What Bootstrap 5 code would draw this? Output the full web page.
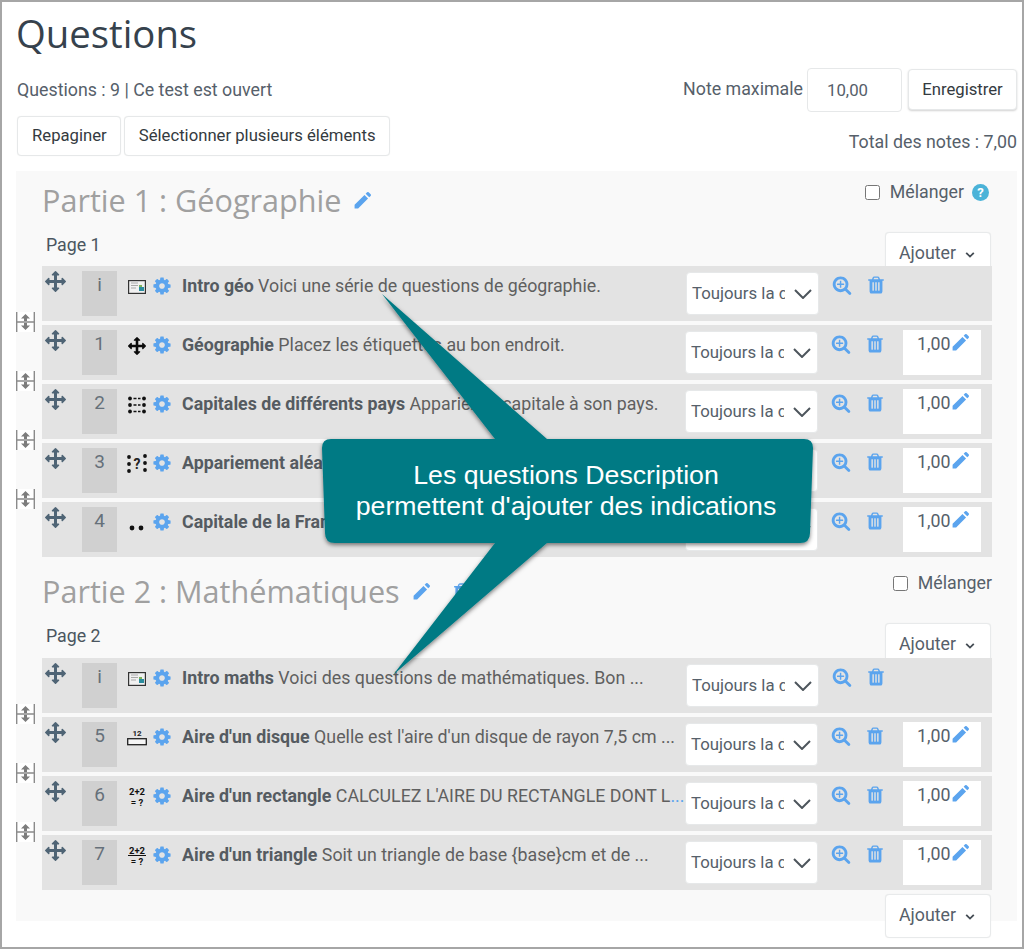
<!DOCTYPE html>
<html lang="fr">
<head>
<meta charset="utf-8">
<title>Questions</title>
<link href="https://cdn.jsdelivr.net/npm/bootstrap@5.3.0/dist/css/bootstrap.min.css" rel="stylesheet">
<style>
html,body{margin:0;padding:0;background:#fff}
body{font-family:Roboto,"Liberation Sans",sans-serif;font-size:17.8px;color:#56606a}
.frame{position:relative;width:1024px;height:949px;border:2px solid #a6a6a6;padding:0 5px 0 14px;overflow:hidden;box-sizing:border-box}
.qtitle{font-family:"Open Sans",sans-serif;font-weight:400;font-size:38.3px;line-height:50px;color:#36424d;margin:6px 0 10px 0}
.plainbtn{background:#fff;border:1px solid #e6e8e9;color:#343a40;font-size:16.7px;border-radius:4px;line-height:24px;padding:7px 13px 7px 14px;box-shadow:0 0 1px rgba(0,0,0,.08)}
.left-head{height:103px}
.status{line-height:24px;margin:10px 0 14px 1px}
.left-head .plainbtn:first-child{margin-left:1px}
.right-head{width:340px}
.gradeinput{width:95px;height:44px;border:1px solid #e6e8e9;border-radius:4px;background:#fff;padding:0 19px;line-height:42px;color:#56606a;font-size:16.8px}
.savebtn{width:109px;height:41px;padding:0;margin-left:6px;margin-top:1px;box-shadow:0 1px 2px rgba(0,0,0,.18)}
.maxlabel{margin-right:4px;line-height:41px}
.totalline{text-align:right;margin-top:18px;line-height:24px}
.secbox{background:#f9f9f9;height:750px;padding:0 25px 0 26px;margin-top:0}
.sechead{height:61px}
.sechead.second{height:66px}
.sectitle{font-family:"Open Sans",sans-serif;font-weight:400;font-size:30.6px;line-height:40px;color:#a0a0a0;margin:0}
.titlebox{padding-top:9px}
.second .titlebox{padding-top:14px}
.titlepen{margin-left:12px}
.shuffle{padding-top:8px}
.second .shuffle{padding-top:13px}
.shuffle input{width:15px;height:15px;margin:0 10px 0 0;accent-color:#777}
.pagebar{height:34px;padding-left:4px}
.pagebar.second{height:35px}
.pagename{padding-top:1px;line-height:24px;color:#4b5660}
.addbtn{width:106px;height:44px;margin-right:1px;background:#fff;border:1px solid #e8eaeb;border-radius:4px;color:#56606a;padding:7px 0 0 13px;line-height:26px;text-align:left;box-shadow:0 0 1px rgba(0,0,0,.08)}
.addbtn svg{margin-left:9px;vertical-align:0}
.qrow{position:relative;height:55px;background:#e3e3e3;margin-bottom:4px;z-index:1}
.qrow:last-child{margin-bottom:0}
.movecell{width:40px;padding:1px 0 0 3px}
.numcell{width:35px;height:45px;margin-top:5px;background:#d0d0d0;text-align:center;color:#66707a;font-size:19px;line-height:28px;flex:none}
.iconcell{width:26px;margin-left:11px;padding-top:7px;flex:none}
.gearcell{width:28px;padding-top:6px;flex:none}
.gearcell svg{margin-left:-2px}
.textcell{width:504px;padding-top:8px;line-height:24px;white-space:nowrap;overflow:hidden;color:#5f5f5f;flex:none}
.textcell b{color:#555b61;font-weight:700}
.pickcell{width:146px;padding-top:6px;flex:none}
.shiftl .pickcell{margin-left:-1px;width:146px}
.versionpick{width:133px;height:43px;padding:0 33px 0 5px;font-family:Roboto,sans-serif;font-size:16.8px;color:#56606a;border:1px solid #e6e8e9;border-radius:4px;background-image:url("data:image/svg+xml,%3csvg xmlns='http://www.w3.org/2000/svg' viewBox='0 0 18 10'%3e%3cpath fill='none' stroke='%234d555c' stroke-width='2' d='M1 1l8 8 8-8'/%3e%3c/svg%3e");background-size:18px 10px;background-position:right 6px center}
.zoomcell{width:34px;padding-top:5px;flex:none}
.trashcell{width:38px;padding-top:5px;flex:none}
.markcell{width:78px;height:45px;margin-top:5px;background:#fff;padding:1px 0 0 14px;line-height:26px;font-size:17.8px;color:#56606a;flex:none;white-space:nowrap}
.markcell svg{vertical-align:-2px;margin-left:1px}
.breakicon{position:absolute;left:-26px;top:-13px;width:19px;height:20px;background:#fff;z-index:2}
.lastadd{position:absolute;left:883px;top:892px;z-index:1}
.tipshape{position:absolute;left:0;top:0;z-index:5;pointer-events:none}
.tiptext{position:absolute;left:320px;top:458px;width:488px;text-align:center;color:#fff;font-family:"Liberation Sans",Arial,sans-serif;font-size:26.7px;line-height:31px;z-index:6;white-space:nowrap}
.ellip{color:#5ba4ee}
.helpmark{margin-right:1px}
</style>
</head>
<body>
<svg width="0" height="0" class="d-block" aria-hidden="true">
<defs>
<symbol id="i-move" viewBox="0 0 1792 1792"><path d="M1792 896q0 26-19 45l-256 256q-19 19-45 19t-45-19-19-45v-128h-384v384h128q26 0 45 19t19 45-19 45l-256 256q-19 19-45 19t-45-19l-256-256q-19-19-19-45t19-45 45-19h128v-384h-384v128q0 26-19 45t-45 19-45-19l-256-256q-19-19-19-45t19-45l256-256q19-19 45-19t45 19 19 45v128h384v-384h-128q-26 0-45-19t-19-45 19-45l256-256q19-19 45-19t45 19l256 256q19 19 19 45t-19 45-45 19h-128v384h384v-128q0-26 19-45t45-19 45 19l256 256q19 19 19 45z"/></symbol>
<symbol id="i-gear" viewBox="0 0 1792 1792"><path fill-rule="evenodd" d="M1152 896q0-106-75-181t-181-75-181 75-75 181 75 181 181 75 181-75 75-181zm512-109v222q0 12-8 23t-20 13l-185 28q-19 54-39 91 35 50 107 138 10 12 10 25t-9 23q-27 37-99 108t-94 71q-12 0-26-9l-138-108q-44 23-91 38-16 136-29 186-7 28-36 28h-222q-14 0-24.500-8.500t-11.500-21.500l-28-184q-49-16-90-37l-141 107q-10 9-25 9-14 0-25-11-126-114-165-168-7-10-7-23 0-12 8-23 15-21 51-66.500t54-70.500q-27-50-41-99l-183-27q-13-2-21-12.500t-8-23.500v-222q0-12 8-23t19-13l186-28q14-46 39-92-40-57-107-138-10-12-10-24 0-10 9-23 26-36 98.500-107.500t94.500-71.500q13 0 26 10l138 107q44-23 91-38 16-136 29-186 7-28 36-28h222q14 0 24.500 8.500t11.500 21.500l28 184q49 16 90 37l142-107q9-9 24-9 13 0 25 10 129 119 165 170 7 8 7 22 0 12-8 23-15 21-51 66.500t-54 70.500q26 50 41 98l183 28q13 2 21 12.500t8 23.500z"/></symbol>
<symbol id="i-zoom" viewBox="0 0 1792 1792"><path fill-rule="evenodd" d="M1088 800v64q0 13-9.500 22.500t-22.500 9.500h-224v224q0 13-9.500 22.500t-22.500 9.500h-64q-13 0-22.500-9.500t-9.500-22.500v-224h-224q-13 0-22.500-9.500t-9.500-22.500v-64q0-13 9.500-22.500t22.500-9.500h224v-224q0-13 9.500-22.500t22.500-9.500h64q13 0 22.500 9.500t9.500 22.500v224h224q13 0 22.500 9.500t9.500 22.500zm128 32q0-185-131.500-316.500t-316.500-131.500-316.500 131.500-131.500 316.500 131.500 316.500 316.500 131.500 316.500-131.500 131.500-316.500zm512 832q0 53-37.500 90.500t-90.500 37.500q-54 0-90-38l-343-342q-179 124-399 124-143 0-273.500-55.500t-225-150-150-225-55.500-273.500 55.500-273.500 150-225 225-150 273.500-55.500 273.500 55.500 225 150 150 225 55.500 273.500q0 220-124 399l343 343q37 37 37 90z"/></symbol>
<symbol id="i-trash" viewBox="0 0 1792 1792"><path fill-rule="evenodd" d="M704 1376v-704q0-14-9-23t-23-9h-64q-14 0-23 9t-9 23v704q0 14 9 23t23 9h64q14 0 23-9t9-23zm256 0v-704q0-14-9-23t-23-9h-64q-14 0-23 9t-9 23v704q0 14 9 23t23 9h64q14 0 23-9t9-23zm256 0v-704q0-14-9-23t-23-9h-64q-14 0-23 9t-9 23v704q0 14 9 23t23 9h64q14 0 23-9t9-23zm-544-992h448l-48-117q-7-9-17-11h-317q-10 2-17 11zm928 32v64q0 14-9 23t-23 9h-96v948q0 83-47 143.500t-113 60.500h-832q-66 0-113-58.500t-47-141.500v-952h-96q-14 0-23-9t-9-23v-64q0-14 9-23t23-9h309l70-167q15-37 54-63t79-26h320q40 0 79 26t54 63l70 167h309q14 0 23 9t9 23z"/></symbol>
<symbol id="i-pen" viewBox="0 0 24 24"><path d="M2 17.500 14.500 5l4.500 4.500L6.500 22H2zM16 3.500l1.800-1.800q1-1 2 0l2.500 2.500q1 1 0 2L20.500 8z"/></symbol>
<symbol id="i-break" viewBox="0 0 19 20"><path d="M.7 0v20M18.300 0v20M1 10h17" stroke="#8b8b8b" stroke-width="1.400" fill="none"/><path d="M9.500 2 14 6.500H11V9H8V6.500H5zM9.500 18 14 13.500H11V11H8v2.500H5z" fill="#7c7c7c"/></symbol>
<symbol id="i-desc" viewBox="0 0 18 14"><rect x=".6" y=".6" width="16.800" height="12.800" fill="#f1f1f1" stroke="#333" stroke-width="1.200"/><path d="M3 3h7M3 5.500h7M3 8h5" stroke="#a9a9a9"/><rect x="11" y="7" width="5" height="4" fill="#2b8c9e"/><rect x="11" y="5" width="3" height="2" fill="#7fb35a"/></symbol>
<symbol id="i-match" viewBox="0 0 18 18"><g fill="#111"><circle cx="2" cy="2.500" r="1.900"/><circle cx="2" cy="9" r="1.900"/><circle cx="2" cy="15.500" r="1.900"/><circle cx="16" cy="2.500" r="1.900"/><circle cx="16" cy="9" r="1.900"/><circle cx="16" cy="15.500" r="1.900"/></g><path d="M5.500 2.500h7M5.500 9h7M5.500 15.500h7" stroke="#111" stroke-width="1.700" stroke-dasharray="3 1.500"/></symbol>
<symbol id="i-random" viewBox="0 0 20 20"><g fill="#111"><circle cx="2" cy="3" r="1.900"/><circle cx="2" cy="10" r="1.900"/><circle cx="2" cy="17" r="1.900"/><circle cx="18" cy="2" r="1.900"/><circle cx="18" cy="9" r="1.900"/><circle cx="18" cy="16" r="1.900"/></g></symbol>
<symbol id="i-multi" viewBox="0 0 18 6"><circle cx="4" cy="3" r="2.400" fill="#111"/><circle cx="13" cy="3" r="2.400" fill="#111"/></symbol>
<symbol id="i-chev" viewBox="0 0 10 8"><path d="M1.200 1.800 5 5.600l3.800-3.800" stroke="#444c54" stroke-width="1.800" fill="none"/></symbol>
</defs>
</svg>

<div class="frame">
<h2 class="qtitle">Questions</h2>
<div class="d-flex justify-content-between">
  <div class="left-head">
    <div class="status">Questions : 9 | Ce test est ouvert</div>
    <div class="d-flex" style="gap:3px">
      <button type="button" class="btn plainbtn">Repaginer</button>
      <button type="button" class="btn plainbtn">Sélectionner plusieurs éléments</button>
    </div>
  </div>
  <div class="right-head">
    <div class="d-flex justify-content-end align-items-start">
      <span class="maxlabel">Note maximale</span>
      <div class="gradeinput">10,00</div>
      <button type="button" class="btn plainbtn savebtn">Enregistrer</button>
    </div>
    <div class="totalline">Total des notes : 7,00</div>
  </div>
</div>

<div class="secbox">
  <div class="sechead d-flex justify-content-between">
    <div class="titlebox d-flex align-items-center align-self-start">
      <h3 class="sectitle">Partie 1 : Géographie</h3>
      <svg class="titlepen" width="19" height="19" fill="#5ba4ee"><use href="#i-pen"/></svg>
    </div>
    <div class="shuffle d-flex align-items-center align-self-start" style="margin-right:2px">
      <input type="checkbox" aria-label="Mélanger"><span>Mélanger</span>
      <svg class="ms-2 helpmark" width="17" height="17" viewBox="0 0 17 17"><circle cx="8.500" cy="8.500" r="8.500" fill="#4bb3d8"/><text x="8.500" y="13" text-anchor="middle" font-family="Roboto,sans-serif" font-weight="700" font-size="13" fill="#fff">?</text></svg>
    </div>
  </div>
  <div class="pagebar d-flex justify-content-between">
    <div class="pagename">Page 1</div>
    <div class="addbtn">Ajouter<svg width="10" height="8"><use href="#i-chev"/></svg></div>
  </div>

  <div>
    <div class="qrow d-flex">
      <div class="movecell"><svg width="21" height="21" fill="#4f6475"><use href="#i-move"/></svg></div>
      <div class="numcell">i</div>
      <div class="iconcell"><svg width="18" height="14"><use href="#i-desc"/></svg></div>
      <div class="gearcell"><svg width="20" height="20" fill="#5ba4ee"><use href="#i-gear"/></svg></div>
      <div class="textcell"><b>Intro géo</b> Voici une série de questions de géographie.</div>
      <div class="pickcell"><select class="form-select versionpick" aria-label="Version"><option>Toujours la dernière</option></select></div>
      <div class="zoomcell"><svg width="20" height="20" fill="#5ba4ee"><use href="#i-zoom"/></svg></div>
      <div class="trashcell"><svg width="20" height="20" fill="#5ba4ee"><use href="#i-trash"/></svg></div>
    </div>
    <div class="qrow d-flex shiftl">
      <svg class="breakicon"><use href="#i-break"/></svg>
      <div class="movecell"><svg width="21" height="21" fill="#4f6475"><use href="#i-move"/></svg></div>
      <div class="numcell">1</div>
      <div class="iconcell"><svg width="18" height="18" fill="#0a0a0a"><use href="#i-move"/></svg></div>
      <div class="gearcell"><svg width="20" height="20" fill="#5ba4ee"><use href="#i-gear"/></svg></div>
      <div class="textcell"><b>Géographie</b> Placez les étiquettes au bon endroit.</div>
      <div class="pickcell"><select class="form-select versionpick" aria-label="Version"><option>Toujours la dernière</option></select></div>
      <div class="zoomcell"><svg width="20" height="20" fill="#5ba4ee"><use href="#i-zoom"/></svg></div>
      <div class="trashcell"><svg width="20" height="20" fill="#5ba4ee"><use href="#i-trash"/></svg></div>
      <div class="markcell">1,00<svg width="19" height="19" fill="#5ba4ee"><use href="#i-pen"/></svg></div>
    </div>
    <div class="qrow d-flex shiftl">
      <svg class="breakicon"><use href="#i-break"/></svg>
      <div class="movecell"><svg width="21" height="21" fill="#4f6475"><use href="#i-move"/></svg></div>
      <div class="numcell">2</div>
      <div class="iconcell"><svg width="18" height="18"><use href="#i-match"/></svg></div>
      <div class="gearcell"><svg width="20" height="20" fill="#5ba4ee"><use href="#i-gear"/></svg></div>
      <div class="textcell"><b>Capitales de différents pays</b> Appariez la capitale à son pays.</div>
      <div class="pickcell"><select class="form-select versionpick" aria-label="Version"><option>Toujours la dernière</option></select></div>
      <div class="zoomcell"><svg width="20" height="20" fill="#5ba4ee"><use href="#i-zoom"/></svg></div>
      <div class="trashcell"><svg width="20" height="20" fill="#5ba4ee"><use href="#i-trash"/></svg></div>
      <div class="markcell">1,00<svg width="19" height="19" fill="#5ba4ee"><use href="#i-pen"/></svg></div>
    </div>
    <div class="qrow d-flex shiftl">
      <svg class="breakicon"><use href="#i-break"/></svg>
      <div class="movecell"><svg width="21" height="21" fill="#4f6475"><use href="#i-move"/></svg></div>
      <div class="numcell">3</div>
      <div class="iconcell"><svg width="20" height="20" viewBox="0 0 20 20" style="margin-left:-1px;margin-top:-1px"><use href="#i-random"/><text x="10" y="15" text-anchor="middle" font-size="14" font-weight="700" font-family="Roboto,sans-serif" fill="#222">?</text></svg></div>
      <div class="gearcell"><svg width="20" height="20" fill="#5ba4ee"><use href="#i-gear"/></svg></div>
      <div class="textcell"><b>Appariement aléatoire</b></div>
      <div class="pickcell"><select class="form-select versionpick" aria-label="Version"><option>Toujours la dernière</option></select></div>
      <div class="zoomcell"><svg width="20" height="20" fill="#5ba4ee"><use href="#i-zoom"/></svg></div>
      <div class="trashcell"><svg width="20" height="20" fill="#5ba4ee"><use href="#i-trash"/></svg></div>
      <div class="markcell">1,00<svg width="19" height="19" fill="#5ba4ee"><use href="#i-pen"/></svg></div>
    </div>
    <div class="qrow d-flex shiftl">
      <svg class="breakicon"><use href="#i-break"/></svg>
      <div class="movecell"><svg width="21" height="21" fill="#4f6475"><use href="#i-move"/></svg></div>
      <div class="numcell">4</div>
      <div class="iconcell"><svg width="18" height="6" style="margin-top:9px"><use href="#i-multi"/></svg></div>
      <div class="gearcell"><svg width="20" height="20" fill="#5ba4ee"><use href="#i-gear"/></svg></div>
      <div class="textcell"><b>Capitale de la France</b></div>
      <div class="pickcell"><select class="form-select versionpick" aria-label="Version"><option>Toujours la dernière</option></select></div>
      <div class="zoomcell"><svg width="20" height="20" fill="#5ba4ee"><use href="#i-zoom"/></svg></div>
      <div class="trashcell"><svg width="20" height="20" fill="#5ba4ee"><use href="#i-trash"/></svg></div>
      <div class="markcell">1,00<svg width="19" height="19" fill="#5ba4ee"><use href="#i-pen"/></svg></div>
    </div>
  </div>

  <div class="sechead second d-flex justify-content-between">
    <div class="titlebox d-flex align-items-center align-self-start">
      <h3 class="sectitle">Partie 2 : Mathématiques</h3>
      <svg class="titlepen" width="19" height="19" fill="#5ba4ee"><use href="#i-pen"/></svg>
      <svg style="margin-left:21px" width="19" height="19" fill="#5ba4ee"><use href="#i-trash"/></svg>
    </div>
    <div class="shuffle d-flex align-items-center align-self-start">
      <input type="checkbox" aria-label="Mélanger"><span>Mélanger</span>
    </div>
  </div>
  <div class="pagebar second d-flex justify-content-between">
    <div class="pagename">Page 2</div>
    <div class="addbtn">Ajouter<svg width="10" height="8"><use href="#i-chev"/></svg></div>
  </div>

  <div>
    <div class="qrow d-flex">
      <div class="movecell"><svg width="21" height="21" fill="#4f6475"><use href="#i-move"/></svg></div>
      <div class="numcell">i</div>
      <div class="iconcell"><svg width="18" height="14"><use href="#i-desc"/></svg></div>
      <div class="gearcell"><svg width="20" height="20" fill="#5ba4ee"><use href="#i-gear"/></svg></div>
      <div class="textcell"><b>Intro maths</b> Voici des questions de mathématiques. Bon ...</div>
      <div class="pickcell"><select class="form-select versionpick" aria-label="Version"><option>Toujours la dernière</option></select></div>
      <div class="zoomcell"><svg width="20" height="20" fill="#5ba4ee"><use href="#i-zoom"/></svg></div>
      <div class="trashcell"><svg width="20" height="20" fill="#5ba4ee"><use href="#i-trash"/></svg></div>
    </div>
    <div class="qrow d-flex shiftl">
      <svg class="breakicon"><use href="#i-break"/></svg>
      <div class="movecell"><svg width="21" height="21" fill="#4f6475"><use href="#i-move"/></svg></div>
      <div class="numcell">5</div>
      <div class="iconcell"><svg width="20" height="18" viewBox="0 0 20 18" style="margin-left:-1px"><text x="10" y="7" text-anchor="middle" font-size="8" font-weight="700" font-family="Roboto,sans-serif" fill="#222">12</text><rect x=".7" y="9.700" width="18.600" height="6" fill="#f5f5f5" stroke="#222" stroke-width="1.300"/></svg></div>
      <div class="gearcell"><svg width="20" height="20" fill="#5ba4ee"><use href="#i-gear"/></svg></div>
      <div class="textcell"><b>Aire d'un disque</b> Quelle est l'aire d'un disque de rayon 7,5 cm ...</div>
      <div class="pickcell"><select class="form-select versionpick" aria-label="Version"><option>Toujours la dernière</option></select></div>
      <div class="zoomcell"><svg width="20" height="20" fill="#5ba4ee"><use href="#i-zoom"/></svg></div>
      <div class="trashcell"><svg width="20" height="20" fill="#5ba4ee"><use href="#i-trash"/></svg></div>
      <div class="markcell">1,00<svg width="19" height="19" fill="#5ba4ee"><use href="#i-pen"/></svg></div>
    </div>
    <div class="qrow d-flex shiftl">
      <svg class="breakicon"><use href="#i-break"/></svg>
      <div class="movecell"><svg width="21" height="21" fill="#4f6475"><use href="#i-move"/></svg></div>
      <div class="numcell">6</div>
      <div class="iconcell"><svg width="18" height="23" viewBox="0 0 18 23"><text x="9" y="9" text-anchor="middle" font-size="9.500" font-weight="700" font-family="Roboto,sans-serif" fill="#111">2+2</text><text x="9" y="20" text-anchor="middle" font-size="9.500" font-weight="700" font-family="Roboto,sans-serif" fill="#111">= ?</text></svg></div>
      <div class="gearcell"><svg width="20" height="20" fill="#5ba4ee"><use href="#i-gear"/></svg></div>
      <div class="textcell"><b>Aire d'un rectangle</b> CALCULEZ L'AIRE DU RECTANGLE DONT L<span class="ellip">...</span></div>
      <div class="pickcell"><select class="form-select versionpick" aria-label="Version"><option>Toujours la dernière</option></select></div>
      <div class="zoomcell"><svg width="20" height="20" fill="#5ba4ee"><use href="#i-zoom"/></svg></div>
      <div class="trashcell"><svg width="20" height="20" fill="#5ba4ee"><use href="#i-trash"/></svg></div>
      <div class="markcell">1,00<svg width="19" height="19" fill="#5ba4ee"><use href="#i-pen"/></svg></div>
    </div>
    <div class="qrow d-flex shiftl">
      <svg class="breakicon"><use href="#i-break"/></svg>
      <div class="movecell"><svg width="21" height="21" fill="#4f6475"><use href="#i-move"/></svg></div>
      <div class="numcell">7</div>
      <div class="iconcell"><svg width="18" height="23" viewBox="0 0 18 23"><text x="9" y="9" text-anchor="middle" font-size="9.500" font-weight="700" font-family="Roboto,sans-serif" fill="#111">2+2</text><path d="M0 10.500h18" stroke="#111"/><text x="9" y="20" text-anchor="middle" font-size="9.500" font-weight="700" font-family="Roboto,sans-serif" fill="#111">= ?</text></svg></div>
      <div class="gearcell"><svg width="20" height="20" fill="#5ba4ee"><use href="#i-gear"/></svg></div>
      <div class="textcell"><b>Aire d'un triangle</b> Soit un triangle de base {base}cm et de ...</div>
      <div class="pickcell"><select class="form-select versionpick" aria-label="Version"><option>Toujours la dernière</option></select></div>
      <div class="zoomcell"><svg width="20" height="20" fill="#5ba4ee"><use href="#i-zoom"/></svg></div>
      <div class="trashcell"><svg width="20" height="20" fill="#5ba4ee"><use href="#i-trash"/></svg></div>
      <div class="markcell">1,00<svg width="19" height="19" fill="#5ba4ee"><use href="#i-pen"/></svg></div>
    </div>
  </div>
</div>
<div class="addbtn lastadd">Ajouter<svg width="10" height="8"><use href="#i-chev"/></svg></div>

<svg class="tipshape" width="1020" height="945" viewBox="2 2 1020 945">
  <defs><filter id="tipshadow" x="-10%" y="-10%" width="120%" height="120%"><feDropShadow dx="0" dy="2" stdDeviation="2.200" flood-color="#000" flood-opacity=".5"/></filter></defs>
  <path filter="url(#tipshadow)" fill="#047a84" d="M382 294 495 439H804Q813 439 813 448L810 533Q810 543 800 543H547L393 675 495 543H335Q325 543 325 533L322 448Q322 439 331 439H547Z"/>
</svg>
<div class="tiptext">Les questions Description<br>permettent d'ajouter des indications</div>
</div>
<script src="https://cdn.jsdelivr.net/npm/bootstrap@5.3.0/dist/js/bootstrap.bundle.min.js"></script>
</body>
</html>
